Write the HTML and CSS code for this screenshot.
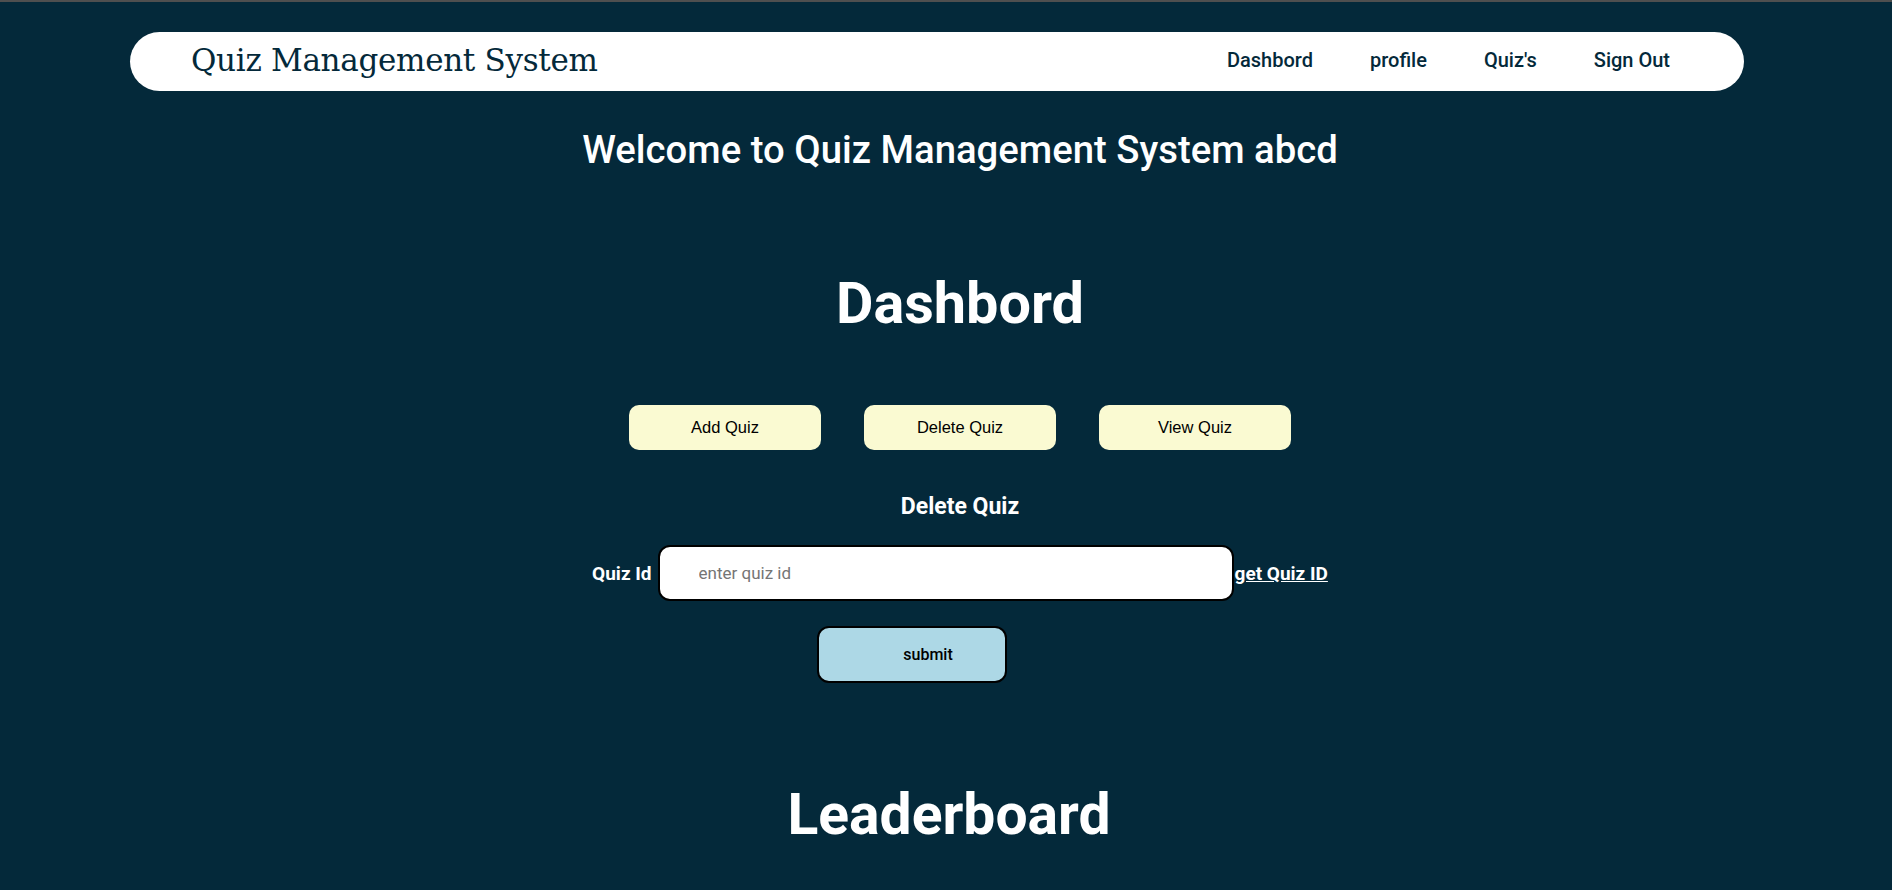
FILE: index.html
```html
<!DOCTYPE html>
<html lang="en">
<head>
<meta charset="utf-8">
<title>Quiz Management System</title>
<link rel="stylesheet" href="styles.css">
</head>
<body>
<div class="topline"></div>
<nav class="navbar">
  <div class="brand">Quiz Management System</div>
  <ul class="nav-links">
    <li><a href="#">Dashbord</a></li>
    <li><a href="#">profile</a></li>
    <li><a href="#">Quiz's</a></li>
    <li><a href="#">Sign Out</a></li>
  </ul>
</nav>
<main class="main">
  <h2 class="welcome">Welcome to Quiz Management System abcd</h2>
  <h1 class="section-title dash-title">Dashbord</h1>
  <div class="actions">
    <button class="action-btn">Add Quiz</button>
    <button class="action-btn">Delete Quiz</button>
    <button class="action-btn">View Quiz</button>
  </div>
  <h3 class="form-title">Delete Quiz</h3>
  <form class="quiz-form">
    <div class="form-row">
      <label class="form-label" for="qid">Quiz Id</label>
      <input class="form-input" id="qid" type="text" placeholder="enter quiz id">
      <a class="form-link" href="#">get Quiz ID</a>
    </div>
    <div class="submit-row">
      <button class="submit-btn" type="button">submit</button>
    </div>
  </form>
  <h1 class="section-title board-title">Leaderboard</h1>
</main>
</body>
</html>
```
FILE: styles.css
```css
* { box-sizing: border-box; }
html, body { margin: 0; padding: 0; }
body {
  background: #04293a;
  font-family: Roboto, "Noto Sans", sans-serif;
  color: #ffffff;
  height: 890px;
  overflow: hidden;
}
.topline {
  height: 2px;
  background: #4f4f4f;
}
.navbar {
  margin: 30px 0 0 130px;
  width: 1614px;
  height: 59px;
  background: #ffffff;
  border-radius: 30px;
  display: flex;
  align-items: center;
  justify-content: space-between;
  padding: 0 74px 3px 61px;
}
.brand {
  font-family: "DejaVu Serif", "Liberation Serif", serif;
  font-size: 31px;
  color: #04293a;
  letter-spacing: -0.3px;
}
.nav-links {
  list-style: none;
  display: flex;
  gap: 57px;
  margin: 0;
  padding: 0;
}
.nav-links a {
  color: #04293a;
  text-decoration: none;
  font-size: 20px;
  font-weight: 500;
}
.main {
  padding-left: 28px;
  display: flex;
  flex-direction: column;
  align-items: center;
}
.welcome {
  margin: 37px 0 0;
  font-size: 38.3px;
  line-height: 44px;
  font-weight: 500;
}
.section-title {
  font-size: 57.6px;
  line-height: 68px;
  font-weight: 700;
  margin: 0;
}
.dash-title { margin-top: 98px; }
.actions {
  display: flex;
  gap: 43px;
  margin-top: 67px;
}
.action-btn {
  width: 192px;
  height: 45px;
  background: #fafad2;
  border: none;
  border-radius: 10px;
  font-family: "Liberation Sans", Arial, sans-serif;
  font-size: 16.5px;
  color: #000;
}
.form-title {
  margin: 42px 0 0;
  font-size: 23px;
  line-height: 30px;
  font-weight: 700;
}
.quiz-form {
  display: flex;
  flex-direction: column;
  align-items: center;
}
.form-row {
  display: flex;
  align-items: center;
  margin-top: 23px;
}
.form-label {
  font-size: 19px;
  font-weight: 700;
  margin-right: 6px;
}
.form-input {
  width: 576px;
  height: 56px;
  border: 2px solid #000;
  border-radius: 12px;
  background: #fff;
  padding: 0 0 0 39px;
  font-family: Roboto, sans-serif;
  font-size: 17px;
  outline: none;
}
.form-input::placeholder { color: #757575; }
.form-link {
  color: #fff;
  font-size: 19px;
  font-weight: 700;
  text-decoration: underline;
  margin-left: 1px;
}
.submit-row {
  margin-top: 25px;
  margin-right: 96px;
}
.submit-btn {
  width: 190px;
  height: 57px;
  background: #add8e6;
  border: 2px solid #000;
  border-radius: 12px;
  padding: 0 0 0 32px;
  font-family: Roboto, sans-serif;
  font-size: 16px;
  font-weight: 500;
  color: #000;
}
.board-title {
  margin-top: 98px;
  margin-right: 22px;
  font-size: 57px;
}
```
